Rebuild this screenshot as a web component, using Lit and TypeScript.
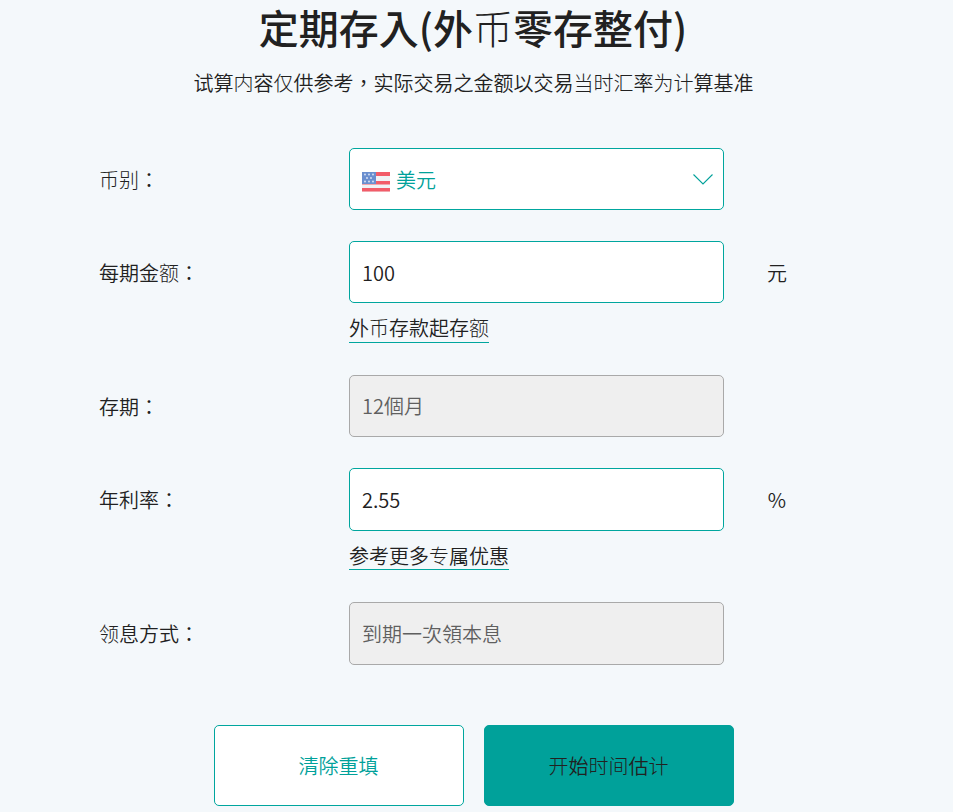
import { LitElement, html, css } from "lit";
import { customElement } from "lit/decorators.js";

@customElement("app-root")
export class AppRoot extends LitElement {
  static styles = css`
    :host {
      display: block;
      height: 812px;
      overflow: hidden;
      background: #f4f8fb;
      color: #212121;
      font-family: "Noto Sans CJK TC", "Noto Sans", sans-serif;
      font-size: 20px;
      font-weight: 350;
    }
    .lt { font-family: "Noto Sans CJK SC", sans-serif; font-weight: 300; }
    h1 {
      margin: 0;
      padding: 2px 7px 0 0;
      height: 51px;
      line-height: 50px;
      font-size: 40px;
      font-weight: 500;
      text-align: center;
    }
    .sub {
      margin: 0;
      height: 94.8px;
      padding: 15px 6px 0 0;
      box-sizing: border-box;
      line-height: 30px;
      font-size: 20px;
      text-align: center;
    }
    .form {
      display: flex;
      flex-direction: column;
      padding-left: 99px;
    }
    .row {
      display: grid;
      grid-template-columns: 250px 375px auto;
      margin-bottom: 30.8px;
    }
    .row.hinted { margin-bottom: 32px; }
    .label { line-height: 63px; height: 62.4px; }
    .unit { line-height: 64px; height: 62.4px; margin-left: 43px; width: 20px; text-align: center; }
    .field {
      height: 62.4px;
      box-sizing: border-box;
      border: 1px solid #00a69e;
      border-radius: 5px;
      background: #fff;
      display: flex;
      align-items: center;
      padding: 1px 10px 0 12px;
      line-height: 1;
    }
    .field.off {
      background: #efefef;
      border-color: #a9a9a9;
      color: #5f5f5f;
      padding-top: 0.6px;
    }
    .select { color: #00a19a; gap: 6px; padding-top: 3px; }
    .select span { flex: 1; }
    .flag { margin-top: 3px; }
    .chev { margin-top: -1px; }
    .hint {
      grid-column: 2;
      justify-self: start;
      margin-top: 13px;
      height: 25.6px;
      line-height: 24px;
      border-bottom: 1px solid #00a69e;
    }
    .actions {
      display: flex;
      justify-content: center;
      gap: 20px;
      margin-top: 29.6px;
      margin-left: -6px;
    }
    button {
      width: 250px;
      height: 81px;
      box-sizing: border-box;
      border: 1px solid #00a69e;
      border-radius: 5px;
      font: inherit;
      padding: 0;
      background: #fff;
      color: #00a19a;
    }
    button.primary { background: #00a19a; border-color: #00a19a; color: #212121; }
  `;

  render() {
    return html`
      <h1>定期存入(外<span class="lt">币</span>零存整付)</h1>
      <p class="sub">试算<span class="lt">内</span>容<span class="lt">仅</span>供参考，实际交易之金额以交易<span class="lt">当时汇</span>率<span class="lt">为计</span>算基准</p>
      <div class="form">
        <div class="row">
          <div class="label"><span class="lt">币别</span>：</div>
          <div class="field select">
            <svg class="flag" width="28" height="20" viewBox="0 0 28 20">
              <rect width="28" height="20" rx="1" fill="#f0f2f5" />
              <rect width="28" height="4" y="0" fill="#f25c69" />
              <rect width="28" height="3.5" y="9" fill="#f25c69" />
              <rect width="28" height="3.5" y="16" fill="#f25c69" />
              <rect width="14" height="12" fill="#6a8fcf" />
              <g fill="#dfe7f5">
                <circle cx="3" cy="2.5" r="0.9" /><circle cx="7" cy="2.5" r="0.9" /><circle cx="11" cy="2.5" r="0.9" />
                <circle cx="5" cy="6" r="0.9" /><circle cx="9" cy="6" r="0.9" />
                <circle cx="3" cy="9.5" r="0.9" /><circle cx="7" cy="9.5" r="0.9" /><circle cx="11" cy="9.5" r="0.9" />
              </g>
            </svg>
            <span>美元</span>
            <svg class="chev" width="20" height="11" viewBox="0 0 20 11" fill="none" stroke="#00a19a" stroke-width="1.1">
              <path d="M0.5 0.5 L10 10 L19.5 0.5" />
            </svg>
          </div>
        </div>
        <div class="row hinted">
          <div class="label">每期金<span class="lt">额</span>：</div>
          <div class="field">100</div>
          <div class="unit">元</div>
          <div class="hint">外<span class="lt">币</span>存款起存<span class="lt">额</span></div>
        </div>
        <div class="row">
          <div class="label">存期：</div>
          <div class="field off">12個月</div>
        </div>
        <div class="row hinted">
          <div class="label">年利率：</div>
          <div class="field">2.55</div>
          <div class="unit">%</div>
          <div class="hint">参考更多<span class="lt">专</span>属优惠</div>
        </div>
        <div class="row">
          <div class="label"><span class="lt">领</span>息方式：</div>
          <div class="field off">到期一次領本息</div>
        </div>
      </div>
      <div class="actions">
        <button>清除重填</button>
        <button class="primary"><span class="lt">开</span>始<span class="lt">时间</span>估<span class="lt">计</span></button>
      </div>
    `;
  }
}
